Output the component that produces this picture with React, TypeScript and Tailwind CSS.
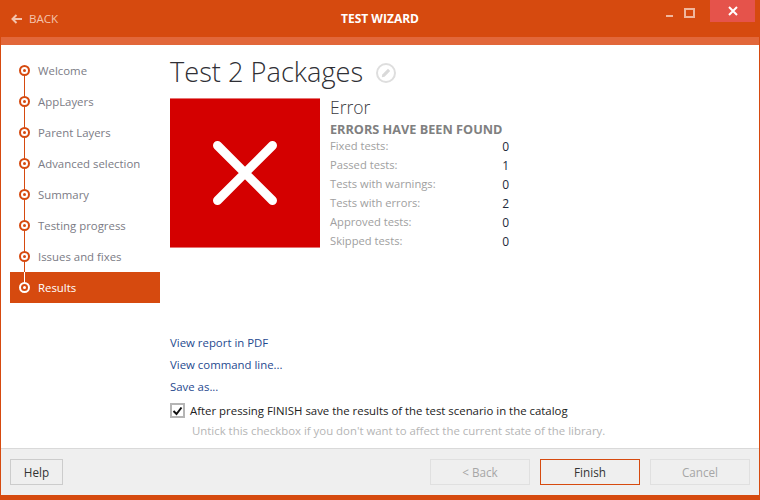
const steps = ["Welcome", "AppLayers", "Parent Layers", "Advanced selection", "Summary", "Testing progress", "Issues and fixes", "Results"];
const stats: [string, string][] = [
  ["Fixed tests:", "0"],
  ["Passed tests:", "1"],
  ["Tests with warnings:", "0"],
  ["Tests with errors:", "2"],
  ["Approved tests:", "0"],
  ["Skipped tests:", "0"],
];

function Step({ label, index }: { label: string; index: number }) {
  const active = index === steps.length - 1;
  const first = index === 0;
  return (
    <div className={`flex h-[31px] items-center ${active ? "bg-[#d64a0f] text-white" : "text-[#7b7b85]"}`}>
      <div className="relative ml-[8px] flex h-full w-[13px] items-center justify-center">
        {!first && <div className={`absolute left-[6px] top-0 h-1/2 w-[1px] ${active ? "bg-white" : "bg-[#d64a0f]"}`} />}
        {!active && <div className="absolute bottom-0 left-[6px] h-1/2 w-[1px] bg-[#d64a0f]" />}
        <div className={`relative z-10 flex h-[11px] w-[11px] items-center justify-center rounded-full border-[2px] ${active ? "border-white bg-[#d64a0f]" : "border-[#d64a0f] bg-white"}`}>
          <div className={`h-[3px] w-[3px] rounded-full ${active ? "bg-white" : "bg-[#d64a0f]"}`} />
        </div>
      </div>
      <span className="ml-[7px] text-[11.4px]">{label}</span>
    </div>
  );
}

function Btn({ label, kind }: { label: string; kind?: "off" | "main" }) {
  return (
    <div className={`flex h-[26px] items-center justify-center border pt-[1px] text-[11.7px] ${kind === "main" ? "w-[100px] border-[#d64a0f] text-[#333]" : kind === "off" ? "w-[100px] border-[#e0e0e0] text-[#a6a6a6]" : "w-[53px] border-[#cccccc] text-[#333]"}`}>
      {label}
    </div>
  );
}

export default function App() {
  return (
    <div className="flex h-[500px] w-[760px] flex-col overflow-hidden border-x border-[#d64a0f] bg-white font-['Open_Sans','Noto_Sans',sans-serif]">
      <header className="-mx-[1px] flex h-[37px] shrink-0 items-start bg-[#d64a0f]">
        <div className="flex h-full w-[300px] items-center pl-[11px] text-[#f3c3ad]">
          <svg width="11" height="10" viewBox="0 0 11 10" fill="none" stroke="currentColor" strokeWidth="2"><path d="M5.5 1 1.5 5l4 4M2 5h9" /></svg>
          <span className="ml-[7px] text-[11.6px]">BACK</span>
        </div>
        <div className="flex h-full w-[160px] items-center justify-center text-[12px] font-bold text-white">TEST WIZARD</div>
        <div className="flex h-full flex-1 items-start justify-end pr-[5px]">
          <div className="mt-[15px] mr-[11px] h-[2px] w-[7px] bg-[#f0b79d]" />
          <div className="mt-[8px] mr-[15px] h-[10px] w-[11px] border-[2px] border-[#f0b79d]" />
          <div className="flex h-[22px] w-[45px] items-center justify-center bg-[#e5534b]">
            <svg width="10" height="10" viewBox="0 0 10 10" stroke="white" strokeWidth="2"><path d="M1 1l8 8M9 1 1 9" /></svg>
          </div>
        </div>
      </header>
      <div className="-mx-[1px] h-[8px] shrink-0 bg-[#e2673a]" />

      <main className="flex min-h-0 flex-1">
        <nav className="ml-[9px] mt-[10px] w-[150px] shrink-0">
          {steps.map((s, i) => <Step key={s} label={s} index={i} />)}
        </nav>
        <section className="ml-[10px] flex min-w-0 flex-1 flex-col">
          <div className="flex h-[53px] items-center">
            <h1 className="text-[27.2px] font-light leading-none text-[#2f2f35]">Test 2 Packages</h1>
            <div className="ml-[13px] mt-[2px] flex h-[20px] w-[20px] items-center justify-center rounded-full border-[2px] border-[#dedede]">
              <svg width="10" height="10" viewBox="0 0 10 10" fill="#d9d9d9"><path d="M7 .8 9.2 3 3.5 8.7.8 9.2l.5-2.7z" /></svg>
            </div>
          </div>
          <div className="flex">
            <div className="flex h-[150px] w-[150px] items-center justify-center border-y border-[#e67373] bg-[#d40000]">
              <svg width="64" height="64" viewBox="0 0 64 64" stroke="white" strokeWidth="9" strokeLinecap="round"><path d="M4.5 4.5 59.5 59.5M59.5 4.5 4.5 59.5" /></svg>
            </div>
            <div className="ml-[10px] w-[179px]">
              <div className="-mt-[1px] text-[17.5px] font-light leading-[20px] text-[#3a3a40]">Error</div>
              <div className="mt-[3px] text-[12.7px] font-bold leading-[19px] text-[#808080]">ERRORS HAVE BEEN FOUND</div>
              <div className="-mt-[2px]">
                {stats.map(([k, v]) => (
                  <div key={k} className="flex h-[19px] items-center justify-between text-[11.2px]">
                    <span className="text-[#a0a0a0]">{k}</span>
                    <span className="text-[12px] text-[#222a3a]">{v}</span>
                  </div>
                ))}
              </div>
            </div>
          </div>
          <div className="mt-[82px] flex flex-col gap-[3px] text-[11.4px] leading-[19px] text-[#1f4a8f]">
            <span>View report in PDF</span>
            <span>View command line...</span>
            <span>Save as...</span>
          </div>
          <div className="mt-[6px] flex items-center">
            <div className="flex h-[15px] w-[15px] items-center justify-center border-[2px] border-[#b5b5b5]">
              <svg width="11" height="10" viewBox="0 0 11 10" fill="none" stroke="#111" strokeWidth="2"><path d="M1.5 5 4.5 8 9.5 1.5" /></svg>
            </div>
            <span className="ml-[5px] text-[11.4px] text-[#222]">After pressing FINISH save the results of the test scenario in the catalog</span>
          </div>
          <div className="ml-[22px] mt-[3px] text-[11.4px] text-[#b5b5b5]">Untick this checkbox if you don't want to affect the current state of the library.</div>
        </section>
      </main>

      <footer className="flex h-[47px] shrink-0 items-center border-t border-[#d9d9d9] bg-[#efefef] pl-[9px] pr-[9px]">
        <Btn label="Help" />
        <div className="flex-1" />
        <div className="flex gap-[10px]">
          <Btn label="< Back" kind="off" />
          <Btn label="Finish" kind="main" />
          <Btn label="Cancel" kind="off" />
        </div>
      </footer>
      <div className="-mx-[1px] h-[5px] shrink-0 bg-[#d64a0f]" />
    </div>
  );
}
